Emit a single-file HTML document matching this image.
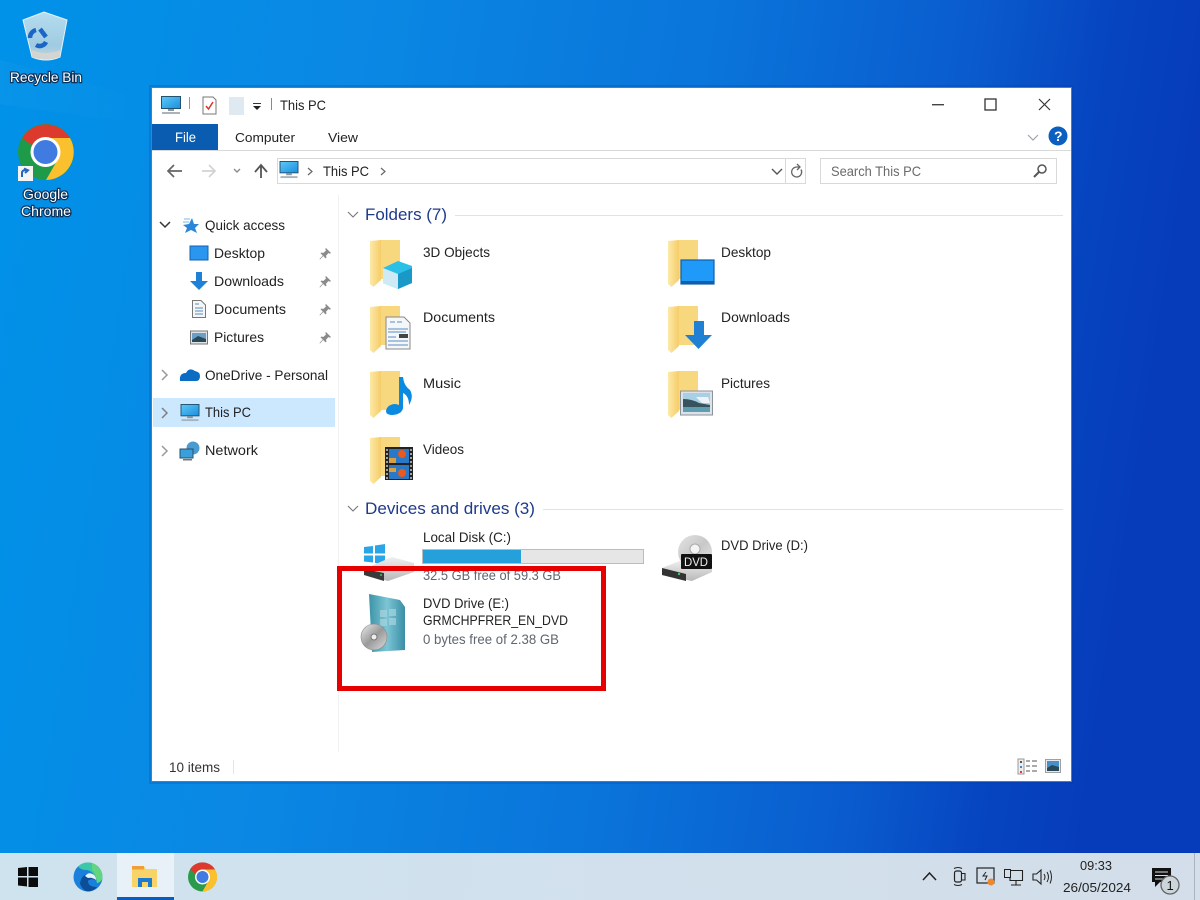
<!DOCTYPE html>
<html><head><meta charset="utf-8"><title>This PC</title>
<style>
html,body{margin:0;padding:0;width:1200px;height:900px;overflow:hidden;background:#0a78d8}
svg{position:absolute;left:0;top:0;display:block;filter:blur(.35px)}
text{font-family:"Liberation Sans",sans-serif;font-size:14px;fill:#1a1a1a}
.d{fill:#fff;paint-order:stroke;stroke:#0c1c3c;stroke-width:2.4px;stroke-opacity:.8}
.h{font-size:17px;fill:#1f3a8a}
.g{fill:#5f6670}
.t{fill:#222}
</style></head><body>
<svg width="1200" height="900" viewBox="0 0 1200 900" xmlns="http://www.w3.org/2000/svg">
<defs>
<linearGradient id="bg" x1="0" y1="0" x2="1" y2="0.12">
<stop offset="0" stop-color="#0092e8"/><stop offset=".3" stop-color="#0a88e4"/><stop offset=".6" stop-color="#0a74da"/><stop offset=".8" stop-color="#0a5cce"/><stop offset=".92" stop-color="#0644bf"/><stop offset="1" stop-color="#063cba"/>
</linearGradient>
<linearGradient id="ray" x1="0" y1="0" x2="1" y2="0"><stop offset="0" stop-color="#fff" stop-opacity=".14"/><stop offset="1" stop-color="#fff" stop-opacity="0"/></linearGradient>
<linearGradient id="fo" x1="0" y1="0" x2="1" y2="0"><stop offset="0" stop-color="#fdeaa8"/><stop offset="1" stop-color="#f5cc68"/></linearGradient>
<linearGradient id="scr" x1="0" y1="0" x2="1" y2="1"><stop offset="0" stop-color="#5ec8f5"/><stop offset="1" stop-color="#1a8fe0"/></linearGradient>
<linearGradient id="bin" x1="0" y1="0" x2="0" y2="1"><stop offset="0" stop-color="#b5dcf0"/><stop offset=".7" stop-color="#9fcbe2"/><stop offset="1" stop-color="#c8d4da"/></linearGradient>
<linearGradient id="box" x1="0" y1="0" x2="1" y2="0"><stop offset="0" stop-color="#3d93a8"/><stop offset=".5" stop-color="#7cc5d4"/><stop offset="1" stop-color="#3a8ea6"/></linearGradient>
<linearGradient id="disc" x1="0" y1="0" x2="1" y2="1"><stop offset="0" stop-color="#eee"/><stop offset=".5" stop-color="#999"/><stop offset="1" stop-color="#ddd"/></linearGradient>
<linearGradient id="disc2" x1="0" y1="0" x2="1" y2="1"><stop offset="0" stop-color="#e4e4e4"/><stop offset=".5" stop-color="#c8c8c8"/><stop offset="1" stop-color="#e8e8e8"/></linearGradient>
<linearGradient id="tb" x1="0" y1="0" x2="1" y2="0"><stop offset="0" stop-color="#cfe3ef"/><stop offset="1" stop-color="#d3deea"/></linearGradient>
<linearGradient id="drv" x1="0" y1="0" x2="0" y2="1"><stop offset="0" stop-color="#f0f0f0"/><stop offset="1" stop-color="#b8b8b8"/></linearGradient>
<symbol id="folder" viewBox="0 0 30 48" overflow="visible">
<path d="M10 0H30V39H10Z" fill="#f8d87e"/>
<path d="M0 1L11 0V40L3.500 47L0 44Z" fill="url(#fo)"/>
</symbol>
<symbol id="pc" viewBox="0 0 20 19" overflow="visible">
<rect x=".5" y=".5" width="19" height="12" fill="url(#scr)" stroke="#24516f"/>
<rect x="7" y="13" width="6" height="2" fill="#8a969e"/>
<rect x="1" y="16" width="18" height="2" fill="#aab3b9"/>
</symbol>
<symbol id="pin" viewBox="0 0 12 12" overflow="visible">
<path d="M7 0L12 5L10.800 5.800L9.500 5L7 7.800L7.500 9.600L6.500 10.400L4.200 8L1 11.500L.5 11L3.800 7.500L1.500 5.300L2.500 4.500L4.300 5L7 2.500L6.300 1Z" fill="#8b8b8b"/>
</symbol>
</defs>

<!-- wallpaper -->
<rect width="1200" height="900" fill="url(#bg)"/>
<path d="M0 60L150 100V125L0 104Z" fill="url(#ray)" opacity=".2"/>
<rect x="149" y="85" width="925" height="699" fill="#0a3a90" opacity=".22"/>

<!-- desktop icons -->
<path d="M23 20L44 12L67 20L60 57Q46 63 32 57Z" fill="url(#bin)" stroke="#e4f2f8" stroke-width="1"/>
<path d="M32 50Q46 56 60 50L60 57Q46 62 32 57Z" fill="#d4d4d0"/>
<g fill="none" stroke="#1b66c4" stroke-width="4.500">
<path d="M30 38A8 8 0 0 1 36 30"/><path d="M40 29L46 37"/><path d="M46 42A7 7 0 0 1 36 45"/>
</g>
<text class="d" x="10" y="82" textLength="72" lengthAdjust="spacingAndGlyphs">Recycle Bin</text>

<circle cx="46" cy="152" r="28" fill="#1f9a48"/>
<path d="M22 138A28 28 0 0 1 70 138L46 138A14 14 0 0 0 33 146Z" fill="#dc3a2c"/>
<path d="M46 138H70A28 28 0 0 1 46 180L58 159Z" fill="#fbc02d"/>
<circle cx="45.500" cy="152" r="15" fill="#fff"/><circle cx="45.500" cy="152" r="12" fill="#3f7be0"/>
<rect x="18" y="166" width="15" height="15" fill="#f4f4f4"/>
<path d="M22 177V173Q22 170 26 170M24 168.500L28 170.300L25 173" fill="none" stroke="#2566c0" stroke-width="2"/>
<text class="d" x="23" y="199" textLength="45" lengthAdjust="spacingAndGlyphs">Google</text>
<text class="d" x="21" y="216" textLength="50" lengthAdjust="spacingAndGlyphs">Chrome</text>

<!-- window -->
<rect x="151" y="87" width="921" height="695" fill="#2f86d2"/>
<rect x="152" y="88" width="919" height="693" fill="#fff"/>

<!-- title bar -->
<use href="#pc" x="161" y="96" width="20" height="19"/>
<rect x="189" y="97" width="1" height="12" fill="#9a9a9a"/>
<path d="M203 97H213L216 100V114H203Z" fill="#fff" stroke="#777"/>
<path d="M206 106L208.500 109L213 102" fill="none" stroke="#d8342a" stroke-width="1.500"/>
<rect x="229" y="97" width="15" height="18" fill="#dfe9f1"/>
<rect x="253" y="103" width="8" height="1" fill="#333"/><path d="M253 106H261L257 110Z" fill="#222"/>
<rect x="271" y="98" width="1" height="12" fill="#8a8a8a"/>
<text class="t" x="280" y="110" textLength="46" lengthAdjust="spacingAndGlyphs">This PC</text>
<rect x="932" y="104" width="12" height="1.400" fill="#444"/>
<rect x="985" y="99" width="11" height="11" fill="none" stroke="#333" stroke-width="1.300"/>
<path d="M1039 99L1050 110M1050 99L1039 110" stroke="#333" stroke-width="1.200" fill="none"/>

<!-- ribbon -->
<rect x="152" y="124" width="66" height="26" fill="#0a5cb0"/>
<text x="175" y="142" style="fill:#fff" textLength="21" lengthAdjust="spacingAndGlyphs">File</text>
<text class="t" x="235" y="142" textLength="60" lengthAdjust="spacingAndGlyphs" style="font-size:13px">Computer</text>
<text class="t" x="328" y="142" textLength="30" lengthAdjust="spacingAndGlyphs" style="font-size:13px">View</text>
<rect x="152" y="150" width="919" height="1" fill="#d8d9da"/>
<path d="M1028 135L1033 140L1038 135" fill="none" stroke="#9aa5ad" stroke-width="1.200"/>
<circle cx="1058" cy="136" r="9.500" fill="#0a5fc0"/>
<text x="1054" y="141" style="fill:#fff;font-size:14px;font-weight:bold">?</text>

<!-- nav row -->
<path d="M174 165L168 171L174 177M168 171H182" fill="none" stroke="#666" stroke-width="1.700"/>
<path d="M209 165L215 171L209 177M215 171H202" fill="none" stroke="#d2d2d2" stroke-width="1.700"/>
<path d="M234 169L237 172L240 169" fill="none" stroke="#8a8a8a" stroke-width="1.400"/>
<path d="M255 172L261 165L267 172M261 165V178" fill="none" stroke="#555" stroke-width="1.800"/>
<rect x="277.500" y="158.500" width="528" height="25" fill="#fff" stroke="#d9d9d9"/>
<rect x="785" y="159" width="1" height="24" fill="#d9d9d9"/>
<use href="#pc" x="279" y="161" width="20" height="18"/>
<path d="M308 168L312 171.500L308 175" fill="none" stroke="#666" stroke-width="1.200"/>
<text class="t" x="323" y="176" textLength="46" lengthAdjust="spacingAndGlyphs">This PC</text>
<path d="M381 168L385 171.500L381 175" fill="none" stroke="#666" stroke-width="1.200"/>
<path d="M772 169L777 174L782 169" fill="none" stroke="#555" stroke-width="1.400"/>
<path d="M801 169.500A5 5 0 1 1 797 167H800M797 164L800 167L797 170" fill="none" stroke="#666" stroke-width="1.300"/>
<rect x="820.500" y="158.500" width="236" height="25" fill="#fff" stroke="#d9d9d9"/>
<text x="831" y="176" style="fill:#6a6a6a" textLength="90" lengthAdjust="spacingAndGlyphs">Search This PC</text>
<circle cx="1042" cy="169" r="4" fill="none" stroke="#555" stroke-width="1.500"/><path d="M1039 172L1034 177" stroke="#555" stroke-width="2"/>

<!-- nav pane -->
<rect x="338" y="195" width="1" height="557" fill="#f2f2f2"/>
<rect x="153" y="398" width="182" height="29" fill="#cce8ff"/>
<path d="M160 222L165 227L170 222" fill="none" stroke="#333" stroke-width="1.500"/>
<path d="M192 218L194 224L199 224L195 228L197 233L191 230L185 233L187 228L183 225L189 224Z" fill="#2a86d8"/>
<path d="M183 222H189M184 219H190" stroke="#8fc5ee" stroke-width="1.200"/>
<text x="205" y="230" class="t" textLength="80" lengthAdjust="spacingAndGlyphs">Quick access</text>
<rect x="190" y="246" width="18" height="14" fill="#2a96f0" stroke="#1262b0"/>
<text x="214" y="258" class="t" textLength="51" lengthAdjust="spacingAndGlyphs">Desktop</text>
<use href="#pin" x="319" y="248" width="12" height="12"/>
<path d="M196 272H202V281H208L199 290L190 281H196Z" fill="#1f80d8"/>
<text x="214" y="286" class="t" textLength="70" lengthAdjust="spacingAndGlyphs">Downloads</text>
<use href="#pin" x="319" y="276" width="12" height="12"/>
<path d="M192.500 300.500H201L205.500 305V317.500H192.500Z" fill="#f4f6f8" stroke="#777"/>
<path d="M195 304H199M195 308H203M195 311H203M195 314H203" stroke="#5a8cc0"/>
<text x="214" y="314" class="t" textLength="72" lengthAdjust="spacingAndGlyphs">Documents</text>
<use href="#pin" x="319" y="304" width="12" height="12"/>
<rect x="190.500" y="331" width="17" height="13" fill="#e0e4e8" stroke="#777"/><rect x="192" y="333" width="14" height="9" fill="#6a9fc8"/><path d="M192 340L198 336L206 339V342H192Z" fill="#2a4a5a"/>
<text x="214" y="342" class="t" textLength="50" lengthAdjust="spacingAndGlyphs">Pictures</text>
<use href="#pin" x="319" y="332" width="12" height="12"/>
<path d="M162 370L167 375L162 380" fill="none" stroke="#9a9a9a" stroke-width="1.500"/>
<path d="M180 381Q179 373 186 373Q189 367 195 371Q200 372 200 376Q200 381 196 381Z" fill="#0b6cc4"/>
<text x="205" y="380" class="t" textLength="123" lengthAdjust="spacingAndGlyphs">OneDrive - Personal</text>
<path d="M162 408L167 413L162 418" fill="none" stroke="#808080" stroke-width="1.500"/>
<use href="#pc" x="180" y="404" width="20" height="18"/>
<text x="205" y="417" class="t" textLength="46" lengthAdjust="spacingAndGlyphs">This PC</text>
<path d="M162 446L167 451L162 456" fill="none" stroke="#9a9a9a" stroke-width="1.500"/>
<circle cx="193" cy="448" r="6.500" fill="#4a9bd0"/><rect x="180" y="449" width="13" height="9" fill="#3aa0dc" stroke="#26506c"/><rect x="183" y="459" width="9" height="1.500" fill="#777"/>
<text x="205" y="455" class="t" textLength="53" lengthAdjust="spacingAndGlyphs">Network</text>

<!-- content headers -->
<path d="M348 212L353 217L358 212" fill="none" stroke="#777" stroke-width="1.100"/>
<text class="h" x="365" y="220" textLength="82" lengthAdjust="spacingAndGlyphs">Folders (7)</text>
<rect x="455" y="215" width="608" height="1" fill="#e2e2e2"/>
<path d="M348 506L353 511L358 506" fill="none" stroke="#777" stroke-width="1.100"/>
<text class="h" x="365" y="514" textLength="170" lengthAdjust="spacingAndGlyphs">Devices and drives (3)</text>
<rect x="543" y="509" width="520" height="1" fill="#e2e2e2"/>

<!-- folders -->
<use href="#folder" x="370" y="240" width="30" height="48"/>
<use href="#folder" x="370" y="306" width="30" height="48"/>
<use href="#folder" x="370" y="371" width="30" height="48"/>
<use href="#folder" x="370" y="437" width="30" height="48"/>
<use href="#folder" x="668" y="240" width="30" height="48"/>
<use href="#folder" x="668" y="306" width="30" height="48"/>
<use href="#folder" x="668" y="371" width="30" height="48"/>

<!-- 3D -->
<path d="M383 268L398 261L412 266V283L398 289L383 283Z" fill="#2cc0e8"/>
<path d="M383 268L398 274V289L383 283Z" fill="#cfeaf4"/>
<path d="M398 274L412 268V283L398 289Z" fill="#1a98c8"/>
<text x="423" y="257" class="t" textLength="67" lengthAdjust="spacingAndGlyphs">3D Objects</text>
<!-- doc -->
<path d="M386 317H404L410 323V349H386Z" fill="#f4f6f8" stroke="#888"/>
<path d="M390 322H395M397 322H402M388 329H408M388 332H406M388 337H396M388 341H408M388 345H408" stroke="#5a8dc4"/>
<rect x="399" y="334" width="9" height="4" fill="#444"/>
<text x="423" y="322" class="t" textLength="72" lengthAdjust="spacingAndGlyphs">Documents</text>
<!-- music -->
<path d="M399 377L403 377Q404 386 410 390Q414 397 409 405Q409 396 403 393V408Q402 414 393 415Q386 415 386 411Q387 405 394 404Q397 404 399 405Z" fill="#0a8ae0"/>
<text x="423" y="388" class="t" textLength="38" lengthAdjust="spacingAndGlyphs">Music</text>
<!-- video -->
<rect x="385" y="447" width="28" height="33" fill="#222"/>
<rect x="389" y="449" width="20" height="14" fill="#2a78c8"/><rect x="389" y="465" width="20" height="14" fill="#2a78c8"/>
<circle cx="402" cy="454" r="4" fill="#e85a20"/><circle cx="402" cy="473" r="4" fill="#e85a20"/><path d="M389 458H396V463H389ZM389 468H396V472H389Z" fill="#d8a040"/>
<path d="M387 449V479M411 449V479" stroke="#ccc" stroke-width="1.500" stroke-dasharray="2 2"/>
<text x="423" y="454" class="t" textLength="41" lengthAdjust="spacingAndGlyphs">Videos</text>
<!-- desktop -->
<rect x="681" y="260" width="33" height="24" fill="#1f9af8" stroke="#0f5fac" stroke-width="1.200"/>
<rect x="681" y="281" width="33" height="3" fill="#0f5fac"/>
<text x="721" y="257" class="t" textLength="50" lengthAdjust="spacingAndGlyphs">Desktop</text>
<!-- downloads -->
<path d="M694 321H704V335H712L698.500 349L685 335H694Z" fill="#1f80d4"/>
<text x="721" y="322" class="t" textLength="69" lengthAdjust="spacingAndGlyphs">Downloads</text>
<!-- pictures -->
<rect x="680.500" y="391" width="32" height="24" fill="#dce2e8" stroke="#8a929a"/>
<rect x="683" y="393" width="27" height="19" fill="#a8d0e4"/>
<path d="M683 399Q692 399 699 403L710 405V412H683Z" fill="#37535e"/><path d="M696 397H708L710 403H702Z" fill="#eef4f6"/><rect x="683" y="407" width="27" height="5" fill="#5f9db0"/>
<text x="721" y="388" class="t" textLength="49" lengthAdjust="spacingAndGlyphs">Pictures</text>

<!-- C drive -->
<g fill="#29a6e8"><path d="M364 547L373 546V553.500H364Z"/><path d="M375 545.500L385 544V553.500H375Z"/><path d="M364 555.500H373V562.500L364 561.500Z"/><path d="M375 555.500H385V564L375 563Z"/></g>
<path d="M364 569L392 557L414 563V572L388 581L364 575Z" fill="url(#drv)"/>
<path d="M364 569L384 573V581L364 575Z" fill="#3a3a3a"/>
<circle cx="381" cy="575" r="1" fill="#3bc46a"/>
<text x="423" y="542" class="t" textLength="88" lengthAdjust="spacingAndGlyphs">Local Disk (C:)</text>
<rect x="422.500" y="549.500" width="221" height="14" fill="#e6e6e6" stroke="#bcbcbc"/>
<rect x="423" y="550" width="98" height="13" fill="#26a0da"/>
<text x="423" y="580" class="g" textLength="138" lengthAdjust="spacingAndGlyphs">32.5 GB free of 59.3 GB</text>

<!-- D drive -->
<circle cx="695" cy="552" r="17" fill="url(#disc2)"/><circle cx="695" cy="549" r="5" fill="#f4f4f4" stroke="#aaa"/>
<path d="M662 568L682 560H712V572L692 581L662 575Z" fill="url(#drv)"/>
<path d="M662 568L686 574V581L662 575Z" fill="#333"/>
<circle cx="679" cy="574" r="1.200" fill="#3bc46a"/>
<rect x="681" y="554" width="31" height="15" fill="#111" rx="1"/>
<text x="684" y="566" style="fill:#eee;font-size:12px" textLength="24" lengthAdjust="spacingAndGlyphs">DVD</text>
<text x="721" y="550" class="t" textLength="87" lengthAdjust="spacingAndGlyphs">DVD Drive (D:)</text>

<!-- red box -->
<rect x="339.500" y="568.500" width="264" height="120" fill="none" stroke="#e60000" stroke-width="5"/>
<!-- E drive -->
<path d="M369 594L400 600L405 607V650L372 652Z" fill="url(#box)"/>
<g fill="#a7d5df" opacity=".7"><rect x="380" y="610" width="7" height="7"/><rect x="389" y="609" width="7" height="7"/><rect x="380" y="619" width="7" height="7"/><rect x="389" y="618" width="7" height="7"/></g>
<circle cx="374" cy="637" r="13" fill="url(#disc)" stroke="#888" stroke-width=".6"/><circle cx="374" cy="637" r="3" fill="#eee" stroke="#777"/>
<text x="423" y="608" class="t" textLength="86" lengthAdjust="spacingAndGlyphs">DVD Drive (E:)</text>
<text x="423" y="625" class="t" textLength="145" lengthAdjust="spacingAndGlyphs">GRMCHPFRER_EN_DVD</text>
<text x="423" y="644" class="g" textLength="136" lengthAdjust="spacingAndGlyphs">0 bytes free of 2.38 GB</text>

<!-- status -->
<text x="169" y="772" style="font-size:13.500px;fill:#333" textLength="51" lengthAdjust="spacingAndGlyphs">10 items</text>
<rect x="233" y="760" width="1" height="14" fill="#e4e4e4"/>
<rect x="1018" y="759" width="6" height="15" fill="#eee" stroke="#999"/><rect x="1020" y="761" width="2" height="2" fill="#555"/><rect x="1020" y="766" width="2" height="2" fill="#3a8ad0"/><rect x="1020" y="771" width="2" height="2" fill="#d84040"/>
<path d="M1026 761H1030M1032 761H1037M1026 766H1030M1032 766H1037M1026 771H1030M1032 771H1037" stroke="#777" stroke-width="1.200"/>
<rect x="1045.500" y="759.500" width="15" height="13" fill="#e6eaee" stroke="#a0a0a0"/><rect x="1047" y="761" width="12" height="10" fill="#4a90c8"/><path d="M1047 768L1052 765L1059 767V771H1047Z" fill="#2a4a5a"/>

<!-- taskbar -->
<rect x="0" y="853" width="1200" height="47" fill="url(#tb)"/>
<rect x="117" y="853" width="57" height="47" fill="#e8f1f7"/>
<rect x="117" y="897" width="57" height="3" fill="#0a5cc0"/>
<g fill="#0c0c0c"><path d="M18 868L27 867V876H18Z"/><path d="M28.500 867H38V876H28.500Z"/><path d="M18 877.500H27V886.500L18 885.500Z"/><path d="M28.500 877.500H38V887H28.500Z"/></g>
<!-- edge -->
<circle cx="88" cy="877" r="14.500" fill="#1a80dc"/>
<path d="M78 866.500A14.500 14.500 0 0 1 102.500 877Q102 882 97 883Q94 870 86 870Q81 870 78 866.500Z" fill="#3cc8a8"/>
<path d="M92 863A14.500 14.500 0 0 1 102.500 877Q102 882 97 883Q96 873 92 870Z" fill="#64d480"/>
<path d="M80 884Q81 875 88 874Q94 874 96 880Q90 878 88 881Q88 887 97 887Q94 891 88 891.500Q83 891 80 884Z" fill="#0c4f98"/>
<path d="M85 876Q89 871 94 875Q96 877 96 880Q92 877 88 878Z" fill="#e6f3fa"/>
<!-- explorer -->
<path d="M132 866H144L146 869H157V887H132Z" fill="#f8d368"/>
<rect x="132" y="866" width="12" height="3.500" fill="#ef9e38"/>
<path d="M138 887V878H152V887H148V882H142V887Z" fill="#1a7ad0"/>
<!-- chrome -->
<circle cx="202.500" cy="877" r="14.500" fill="#2c9a4b"/>
<path d="M190 869.500A14.500 14.500 0 0 1 215 869.500H202.500A7.500 7.500 0 0 0 195.500 874Z" fill="#dc3a2c"/>
<path d="M202.500 869.500H215A14.500 14.500 0 0 1 202.500 891.500L209 880Z" fill="#fbc02d"/>
<circle cx="202.500" cy="877" r="7.500" fill="#fff"/><circle cx="202.500" cy="877" r="6" fill="#3f7be0"/>

<!-- tray -->
<path d="M923 880L929.500 873L936 880" fill="none" stroke="#222" stroke-width="1.500"/>
<rect x="954.500" y="871" width="7" height="11" rx="2" fill="none" stroke="#222" stroke-width="1.200"/>
<path d="M954 868.500Q958 866.500 962 868.500M954 884.500Q958 886.500 962 884.500M961.500 873.500H965V880H961.500" fill="none" stroke="#222" stroke-width="1.100"/>
<rect x="977" y="868" width="17" height="15" fill="none" stroke="#222" stroke-width="1.200"/><path d="M986 872L983 876H987L985 880" fill="none" stroke="#222"/><circle cx="991" cy="882" r="3.500" fill="#f0882a"/>
<path d="M1010 870.500H1022.500V880.500H1010ZM1016 880.500V885M1011 885H1021" fill="none" stroke="#222" stroke-width="1.100"/><rect x="1004.500" y="869.500" width="6" height="8" fill="#d3dfe9" stroke="#222"/>
<path d="M1033 874H1036.500L1041 870V884L1036.500 880H1033Z" fill="none" stroke="#222" stroke-width="1.100"/><path d="M1044 874Q1046 877 1044 880M1047 872Q1050 877 1047 882M1050 870.500Q1053 877 1050 883.500" fill="none" stroke="#222" stroke-width="1"/>
<text x="1080" y="870" style="font-size:13px;fill:#222" textLength="32" lengthAdjust="spacingAndGlyphs">09:33</text>
<text x="1063" y="892" style="font-size:13px;fill:#222" textLength="68" lengthAdjust="spacingAndGlyphs">26/05/2024</text>
<path d="M1152 868H1171V882H1160L1155 887V882H1152Z" fill="#111"/>
<path d="M1155 872H1168M1155 875.500H1168M1155 879H1165" stroke="#d3dfe9"/>
<circle cx="1170" cy="885" r="9" fill="#cdd5dc" stroke="#666" stroke-width="1.300"/>
<text x="1166.500" y="890" style="font-size:13px;fill:#111">1</text>
<rect x="1194" y="853" width="1" height="47" fill="#a9b4bf"/>
</svg>
</body></html>
